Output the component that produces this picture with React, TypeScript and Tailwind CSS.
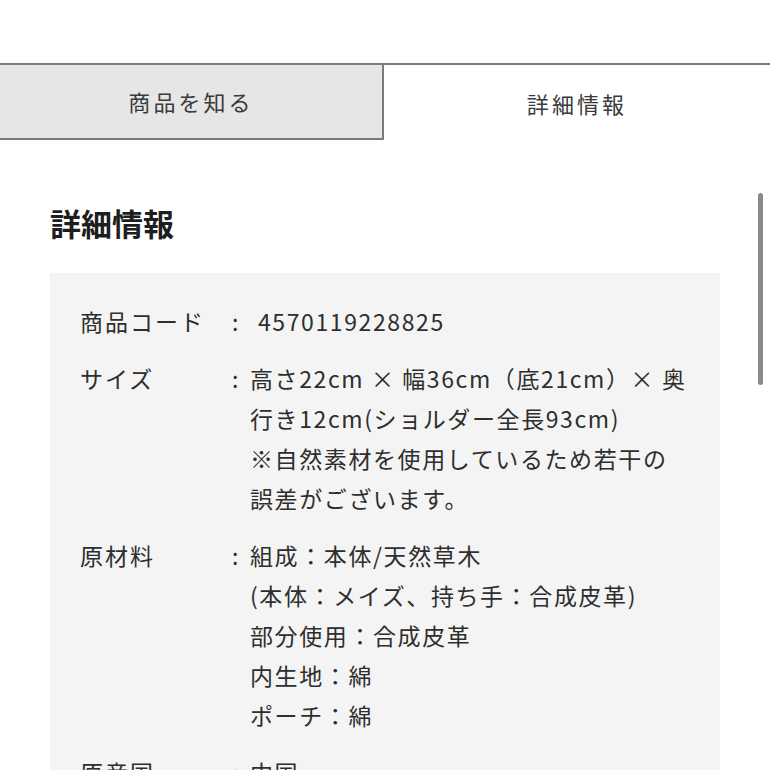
const rows: { label: string; lines: string[]; first?: boolean }[] = [
  { label: '商品コード', lines: ['4570119228825'], first: true },
  {
    label: 'サイズ',
    lines: [
      '高さ22cm × 幅36cm（底21cm）× 奥',
      '行き12cm(ショルダー全長93cm)',
      '※自然素材を使用しているため若干の',
      '誤差がございます。',
    ],
  },
  {
    label: '原材料',
    lines: [
      '組成：本体/天然草木',
      '(本体：メイズ、持ち手：合成皮革)',
      '部分使用：合成皮革',
      '内生地：綿',
      'ポーチ：綿',
    ],
  },
  { label: '原産国', lines: ['中国'] },
]

export default function App() {
  return (
    <div
      className="relative h-[770px] w-[770px] overflow-hidden bg-white text-[#2e2e2e]"
      style={{ fontFamily: '"Noto Sans CJK JP", "Noto Sans", sans-serif' }}
    >
      <div className="h-[63px]" />
      <div className="flex h-[77px]">
        <div className="flex w-[384px] items-center justify-center border-y-2 border-r-2 border-[#7a7a7a] bg-[#e6e6e6] text-[22px] tracking-[0.14em] text-[#3a3a3a]">
          商品を知る
        </div>
        <div className="flex flex-1 items-center justify-center border-t-2 border-[#7a7a7a] pt-[2px] text-[22px] tracking-[0.14em] text-[#3a3a3a]">
          詳細情報
        </div>
      </div>

      <div className="px-[50px]">
        <h2 className="mt-[63px] text-[31px] leading-[40px] font-bold text-[#1e1e1e]">詳細情報</h2>
        <div className="mt-[30px] bg-[#f4f4f4] pt-[28px] pb-[40px] pl-[30px]">
          <div className="flex flex-col gap-[17px]">
            {rows.map((row) => (
              <div key={row.label} className="flex text-[23px] leading-[40px] tracking-[1.6px]">
                <div className="w-[152px] shrink-0 tracking-[2px]">{row.label}</div>
                <div className="w-[18px] shrink-0">:</div>
                <div className={row.first ? 'pl-[8px]' : ''}>
                  {row.lines.map((line) => (
                    <div key={line}>{line}</div>
                  ))}
                </div>
              </div>
            ))}
          </div>
        </div>
      </div>

      <div className="absolute top-[193px] left-[758px] h-[192px] w-[5px] rounded-full bg-[#8a8a8a]" />
    </div>
  )
}
